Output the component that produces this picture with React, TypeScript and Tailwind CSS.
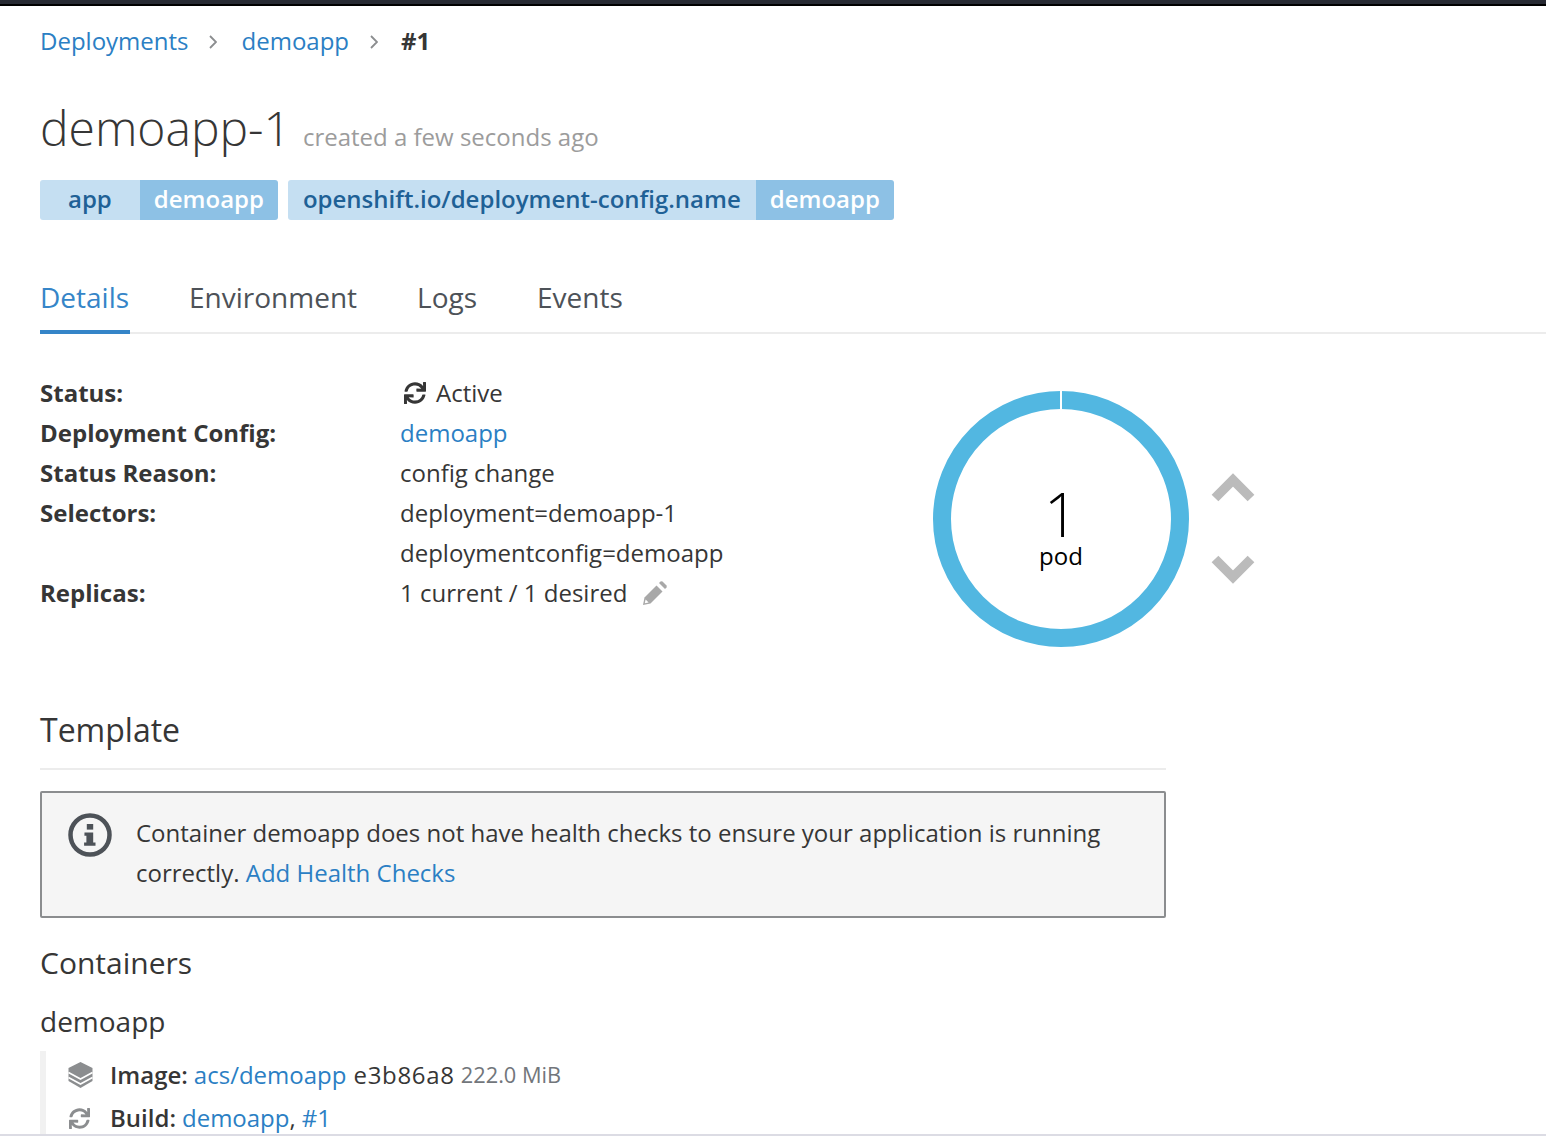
import React from 'react';
import { FaSync } from 'react-icons/fa';

const Link: React.FC<{ children: React.ReactNode }> = ({ children }) => (
  <a className="text-[#2b7fc4]">{children}</a>
);

const Chip: React.FC<{ name: string; value: string; nameClass?: string }> = ({ name, value, nameClass = 'px-[15px]' }) => (
  <div className="flex h-10 rounded-[3px] overflow-hidden font-semibold leading-[38px]">
    <span className={`bg-[#c5dff2] text-[#1f6196] ${nameClass}`}>{name}</span>
    <span className="bg-[#8dc1e5] text-white px-[14px]">{value}</span>
  </div>
);

const Row: React.FC<{ label: string; children: React.ReactNode }> = ({ label, children }) => (
  <div className="flex">
    <div className="w-[360px] font-bold">{label}</div>
    <div>{children}</div>
  </div>
);

const Tab: React.FC<{ label: string; active?: boolean }> = ({ label, active }) => (
  <div
    className={`h-[62px] -mb-[2px] pt-[5px] text-[28px] leading-10 ${
      active ? 'w-[90px] -mr-px text-[#3585c8] border-b-4 border-[#3585c8]' : 'text-[#4d5258]'
    }`}
  >
    {label}
  </div>
);

const Crumb = () => (
  <span className="w-[53px] flex justify-center pr-1">
    <svg viewBox="0 0 8 14" className="w-2 h-[14px] mt-[2px]">
      <path d="M1 1 L7 7 L1 13" fill="none" stroke="#8b8d8f" strokeWidth="1.8" />
    </svg>
  </span>
);

const App: React.FC = () => {
  return (
    <div
      className="h-[1136px] w-full overflow-hidden flex flex-col bg-white text-[24px] leading-10 text-[#363636]"
      style={{ fontFamily: '"Open Sans", sans-serif' }}
    >
      <div className="h-[6px] shrink-0 bg-black border-t-[4px] border-[#272a33]" />

      <div className="flex-1 min-h-0 overflow-hidden pl-10">
        {/* breadcrumb */}
        <div className="flex items-center h-10 mt-[15px]">
          <Link>Deployments</Link>
          <Crumb />
          <Link>demoapp</Link>
          <Crumb />
          <span className="font-bold -ml-px">#1</span>
        </div>

        {/* title */}
        <div className="flex items-baseline mt-[33px] h-[68px]">
          <h1 className="font-light text-[48px] leading-[68px]">demoapp-1</h1>
          <span className="ml-3 text-[#9c9c9c]">created a few seconds ago</span>
        </div>

        <div className="flex gap-[10px] mt-[18px]">
          <Chip name="app" value="demoapp" nameClass="px-[28px]" />
          <Chip name="openshift.io/deployment-config.name" value="demoapp" />
        </div>

        {/* tabs */}
        <div className="flex gap-[60px] mt-[52px] border-b-2 border-[#ececec] h-[62px] items-end">
          <Tab label="Details" active />
          <Tab label="Environment" />
          <Tab label="Logs" />
          <Tab label="Events" />
        </div>

        {/* details */}
        <div className="flex mt-[39px] h-[335px]">
          <div className="w-[893px] shrink-0">
            <Row label="Status:">
              <span className="flex items-center">
                <FaSync className="text-[#363636] w-[22px] h-[22px] ml-[4px] mr-[10px]" />
                Active
              </span>
            </Row>
            <Row label="Deployment Config:">
              <Link>demoapp</Link>
            </Row>
            <Row label="Status Reason:">config change</Row>
            <Row label="Selectors:">
              <div>deployment=demoapp-1</div>
              <div>deploymentconfig=demoapp</div>
            </Row>
            <Row label="Replicas:">
              <span className="flex items-center">
                1 current / 1 desired
                <svg viewBox="0 0 24 24" className="w-6 h-6 ml-4 text-[#a8a8a8]">
                  <path d="M0 24 L1.5 16.5 L13.5 4.5 L19.5 10.5 L7.5 22.5 Z" fill="currentColor" />
                  <path d="M16 2 L17.5 0.5 Q18.5 0 19.5 0.5 L23.5 4.5 Q24 5.5 23.5 6.5 L22 8 Z" fill="currentColor" />
                  <path d="M1.8 22.2 L2.6 18.4 L5.6 21.4 Z" fill="#fff" />
                </svg>
              </span>
            </Row>
          </div>

          <div className="relative w-[256px] h-[256px] mt-[18px] shrink-0">
            <svg viewBox="0 0 256 256" className="w-[256px] h-[256px]">
              <circle cx="128" cy="128" r="119" fill="none" stroke="#52b7e1" strokeWidth="18" />
              <rect x="127" y="0" width="2" height="19" fill="#fff" />
            </svg>
            <div className="absolute inset-0 flex flex-col items-center justify-center text-black">
              <div className="font-light text-[60px] leading-[50px] mt-[21px]">1</div>
              <div className="text-[24px] leading-[28px] mt-[3px]">pod</div>
            </div>
          </div>

          <div className="flex flex-col ml-[22px] mt-[100px]">
            <svg viewBox="0 0 44 30" className="w-11 h-[30px] text-[#bbbbbb]">
              <path d="M4 25 L22 7 L40 25" fill="none" stroke="currentColor" strokeWidth="9.5" />
            </svg>
            <svg viewBox="0 0 44 30" className="w-11 h-[30px] mt-[52px] text-[#bbbbbb]">
              <path d="M4 4 L22 22 L40 4" fill="none" stroke="currentColor" strokeWidth="9.5" />
            </svg>
          </div>
        </div>

        {/* template */}
        <div className="w-[1126px]">
          <h2 className="text-[32px] leading-[44px] pb-[16px] border-b-2 border-[#ececec]">Template</h2>

          <div className="flex mt-[21px] h-[127px] border-2 border-[#8b8d8f] rounded-[2px] bg-[#f5f5f5] pl-[26px] pr-[40px] pt-[20px]">
            <svg viewBox="0 0 44 44" className="w-11 h-11 shrink-0 text-[#4d5258]">
              <circle cx="22" cy="22" r="19.5" fill="none" stroke="currentColor" strokeWidth="4.5" />
              <rect x="18.8" y="11" width="6.4" height="5.6" fill="currentColor" />
              <path d="M16.5 19.5h8.7v10h2.3v3.2h-11.4v-3.2h2.3v-6.8h-2z" fill="currentColor" />
            </svg>
            <div className="ml-[24px]">
              <div>Container demoapp does not have health checks to ensure your application is running</div>
              <div>
                correctly. <Link>Add Health Checks</Link>
              </div>
            </div>
          </div>

          <h3 className="text-[30px] leading-10 mt-[25px]">Containers</h3>
          <h4 className="text-[28px] leading-10 mt-[18px]">demoapp</h4>

          <div className="border-l-[6px] border-[#f1f1f1] pl-[22px] mt-[10px] h-[120px]">
            <div className="flex items-center h-10 pt-[4px] box-content">
              <svg viewBox="0 0 24 26" className="w-[25px] h-[26px] mr-[17px] text-[#8b8d8f]">
                <path d="M12 0 L24 6 V19 L12 26 L0 19 V6 Z" fill="currentColor" />
                <path d="M0 10.5 L12 17 L24 10.5" fill="none" stroke="#fff" strokeWidth="1.6" />
                <path d="M0 15.5 L12 22 L24 15.5" fill="none" stroke="#fff" strokeWidth="1.6" />
              </svg>
              <span className="font-semibold mr-[6px]">Image:</span>
              <Link>acs/demoapp</Link>
              <span className="ml-[7px] tracking-[0.7px]">e3b86a8</span>
              <span className="ml-[6px] text-[#72767b] text-[21.8px]">222.0 MiB</span>
            </div>
            <div className="flex items-center h-10 mt-[3px]">
              <FaSync className="w-[21px] h-[21px] ml-[1px] mr-[20px] text-[#8b8d8f]" />
              <span className="font-semibold mr-[6px]">Build:</span>
              <Link>demoapp</Link>, <span className="ml-[6px]"><Link>#1</Link></span>
            </div>
          </div>
        </div>
      </div>

      <div className="h-[2px] shrink-0 bg-[#dcdce4]" />
    </div>
  );
};

export default App;
